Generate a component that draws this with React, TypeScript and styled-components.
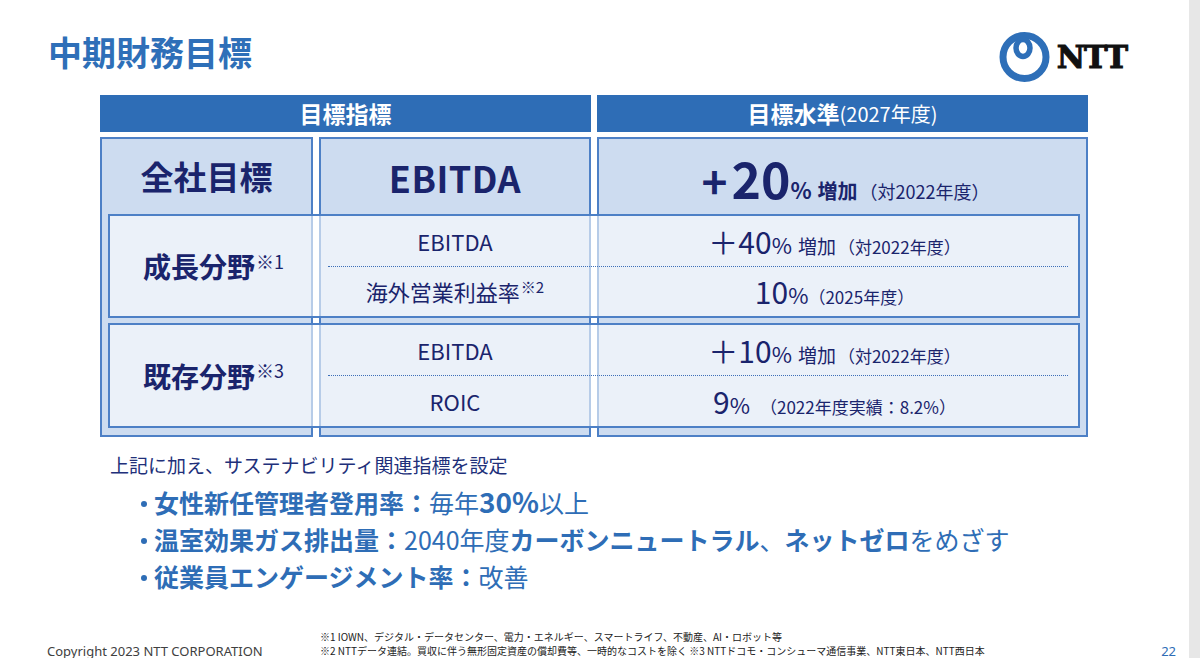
import React from "react";
import styled, { createGlobalStyle } from "styled-components";

const Global = createGlobalStyle`
  html, body { margin: 0; padding: 0; background: #fff; }
  #root { width: 1200px; height: 658px; overflow: hidden; }
  * { box-sizing: border-box; }
`;

const JP = `"Noto Sans CJK JP", "Noto Sans", sans-serif`;
const NAVY = "#1a246c";
const BLUE = "#2e6db6";
const LINE = "#4d80c6";

const Page = styled.div`
  display: flex;
  width: 1200px;
  height: 658px;
  font-family: ${JP};
`;

const Slide = styled.div`
  flex: 1;
  display: flex;
  flex-direction: column;
`;

const ScrollStrip = styled.div`
  width: 11px;
  background: #e7e7e7;
`;

const TitleRow = styled.div`
  display: flex;
  justify-content: space-between;
  align-items: flex-start;
  height: 95px;
  padding: 31px 62px 0 48px;
`;

const Title = styled.h1`
  margin: 0;
  font-size: 34px;
  line-height: 42px;
  font-weight: 700;
  color: #2e6fb8;
`;

const Logo = styled.div`
  display: flex;
  align-items: center;
  gap: 7px;
  margin-top: 1px;
`;

const LogoText = styled.span`
  font-family: "DejaVu Serif", serif;
  font-weight: 900;
  font-size: 31px;
  line-height: 1;
  color: #111;
  letter-spacing: -1px;
  -webkit-text-stroke: 1px #111;
`;

const HeaderGrid = styled.div`
  display: grid;
  grid-template-columns: 213px 272px 491px;
  column-gap: 6px;
  margin-left: 100px;
  height: 37px;
  margin-bottom: 5px;
`;

const HeaderCell = styled.div<{ $span?: number }>`
  grid-column: span ${(p) => p.$span ?? 1};
  background: ${BLUE};
  color: #fff;
  display: flex;
  align-items: center;
  justify-content: center;
  font-size: 23px;
  font-weight: 700;
  line-height: 1;
`;

const HeaderSub = styled.span`
  font-weight: 400;
  font-size: 20px;
`;

const Body = styled.div`
  display: grid;
  grid-template-columns: 213px 272px 491px;
  grid-template-rows: 77px 104px 5px 105px 9px;
  column-gap: 6px;
  margin-left: 100px;
  width: 988px;
`;

const ColumnBox = styled.div<{ $col: number }>`
  grid-column: ${(p) => p.$col};
  grid-row: 1 / -1;
  background: #cddcf0;
  border: 2px solid ${LINE};
`;

const TopCell = styled.div<{ $col: number }>`
  grid-column: ${(p) => p.$col};
  grid-row: 1;
  display: flex;
  align-items: center;
  justify-content: center;
  color: ${NAVY};
  padding-top: 2px;
`;

const TopLabel = styled.span`
  font-size: 33px;
  font-weight: 700;
  line-height: 1;
`;

const TopMetric = styled.span`
  font-size: 36px;
  font-weight: 700;
  line-height: 1;
  letter-spacing: 0.5px;
`;

const TopValue = styled.div`
  display: flex;
  align-items: baseline;
  font-weight: 700;
  line-height: 1;
  margin-left: 6px;
`;

const Sized = styled.span<{ $size: number; $weight?: number; $ml?: number }>`
  font-size: ${(p) => p.$size}px;
  font-weight: ${(p) => p.$weight ?? 400};
  margin-left: ${(p) => p.$ml ?? 0}px;
`;

const RowBox = styled.div<{ $row: number }>`
  grid-column: 1 / -1;
  grid-row: ${(p) => p.$row};
  margin: 0 8px;
  border: 2px solid ${LINE};
  background: rgba(255, 255, 255, 0.6);
  display: grid;
  grid-template-columns: 203px 1fr;
  column-gap: 6px;
  color: ${NAVY};
`;

const RowLabel = styled.div`
  display: flex;
  align-items: center;
  justify-content: center;
  padding-left: 4px;
`;

const LabelText = styled.span`
  font-size: 28px;
  font-weight: 700;
  line-height: 1;
`;

const Mark = styled.span<{ $size: number }>`
  font-size: ${(p) => p.$size}px;
  font-weight: 400;
  position: relative;
  top: -0.3em;
  margin-left: 1px;
`;

const RowRight = styled.div`
  display: flex;
  flex-direction: column;
`;

const SubRow = styled.div`
  flex: 1;
  display: grid;
  grid-template-columns: 272px 1fr;
  column-gap: 6px;
`;

const Divider = styled.div`
  height: 0;
  border-top: 1px dotted #3d6fb8;
  margin: 0 10px 0 9px;
`;

const Metric = styled.div`
  display: flex;
  align-items: center;
  justify-content: center;
  font-size: 22px;
  line-height: 1;
`;

const Value = styled.div`
  display: flex;
  align-items: center;
  justify-content: center;
  line-height: 1;
  padding-right: 6px;
`;

const ValueInner = styled.div`
  display: flex;
  align-items: baseline;
`;

const Notes = styled.div`
  margin: 14px 0 0 110px;
  color: #21307a;
`;

const NoteLead = styled.div`
  font-size: 19px;
  line-height: 28px;
  margin-bottom: 5px;
`;

const Bullets = styled.ul`
  list-style: none;
  margin: 0 0 0 30px;
  padding: 0;
  color: ${BLUE};
  font-size: 25px;
  line-height: 37px;
`;

const Item = styled.li`
  display: flex;
  align-items: center;
  white-space: nowrap;
`;

const Dot = styled.span`
  display: block;
  width: 6px;
  height: 6px;
  border-radius: 50%;
  background: ${BLUE};
  margin: 2px 7px 0 1px;
  flex: none;
`;

const Line = styled.span`
  display: flex;
  align-items: baseline;
`;

const Bold = styled.b<{ $size?: number }>`
  font-weight: 700;
  line-height: 1;
  ${(p) => (p.$size ? `font-size: ${p.$size}px;` : "")}
`;

const Footer = styled.div`
  margin-top: auto;
  display: grid;
  grid-template-columns: 273px 1fr auto;
  align-items: end;
  padding: 0 13px 0 47px;
  height: 28px;
`;

const Copyright = styled.div`
  font-family: "Noto Sans", sans-serif;
  font-size: 13px;
  line-height: 14px;
  color: #404040;
  white-space: nowrap;
`;

const Footnotes = styled.div`
  font-size: 10px;
  line-height: 14px;
  color: #222;
  white-space: nowrap;
`;

const PageNum = styled.div`
  font-family: "Noto Sans", sans-serif;
  font-size: 13px;
  line-height: 14px;
  color: ${BLUE};
`;

const NttMark = () => (
  <svg width="51" height="50" viewBox="0 0 51 50">
    <circle cx="25.5" cy="25" r="21.5" fill="none" stroke="#2e6fb8" strokeWidth="7" />
    <ellipse cx="24" cy="16" rx="7" ry="8.5" fill="none" stroke="#2e6fb8" strokeWidth="5.5" />
  </svg>
);

export default function App() {
  return (
    <Page>
      <Global />
      <Slide>
        <TitleRow>
          <Title>中期財務目標</Title>
          <Logo>
            <NttMark />
            <LogoText>NTT</LogoText>
          </Logo>
        </TitleRow>

        <HeaderGrid>
          <HeaderCell $span={2}>目標指標</HeaderCell>
          <HeaderCell>
            目標水準<HeaderSub>(2027年度)</HeaderSub>
          </HeaderCell>
        </HeaderGrid>

        <Body>
          <ColumnBox $col={1} />
          <ColumnBox $col={2} />
          <ColumnBox $col={3} />

          <TopCell $col={1}>
            <TopLabel>全社目標</TopLabel>
          </TopCell>
          <TopCell $col={2}>
            <TopMetric>EBITDA</TopMetric>
          </TopCell>
          <TopCell $col={3}>
            <TopValue>
              <Sized $size={44} $weight={700}>+</Sized>
              <Sized $size={50} $weight={700} $ml={4}>20</Sized>
              <Sized $size={22} $weight={700}>%</Sized>
              <Sized $size={20} $weight={700} $ml={6}>増加</Sized>
              <Sized $size={18} $ml={2}>（対2022年度）</Sized>
            </TopValue>
          </TopCell>

          <RowBox $row={2}>
            <RowLabel>
              <LabelText>成長分野</LabelText>
              <Mark $size={18}>※1</Mark>
            </RowLabel>
            <RowRight>
              <SubRow>
                <Metric>EBITDA</Metric>
                <Value>
                  <ValueInner>
                    <Sized $size={30}>＋40</Sized>
                    <Sized $size={22}>%</Sized>
                    <Sized $size={19} $ml={6}>増加</Sized>
                    <Sized $size={17} $ml={2}>（対2022年度）</Sized>
                  </ValueInner>
                </Value>
              </SubRow>
              <Divider />
              <SubRow>
                <Metric>
                  海外営業利益率<Mark $size={15}>※2</Mark>
                </Metric>
                <Value>
                  <ValueInner>
                    <Sized $size={30}>10</Sized>
                    <Sized $size={22}>%</Sized>
                    <Sized $size={17}>（2025年度）</Sized>
                  </ValueInner>
                </Value>
              </SubRow>
            </RowRight>
          </RowBox>

          <RowBox $row={4}>
            <RowLabel>
              <LabelText>既存分野</LabelText>
              <Mark $size={18}>※3</Mark>
            </RowLabel>
            <RowRight>
              <SubRow>
                <Metric>EBITDA</Metric>
                <Value>
                  <ValueInner>
                    <Sized $size={30}>＋10</Sized>
                    <Sized $size={22}>%</Sized>
                    <Sized $size={19} $ml={6}>増加</Sized>
                    <Sized $size={17} $ml={2}>（対2022年度）</Sized>
                  </ValueInner>
                </Value>
              </SubRow>
              <Divider />
              <SubRow>
                <Metric>ROIC</Metric>
                <Value>
                  <ValueInner>
                    <Sized $size={30}>9</Sized>
                    <Sized $size={22}>%</Sized>
                    <Sized $size={17} $ml={10}>（2022年度実績：8.2%）</Sized>
                  </ValueInner>
                </Value>
              </SubRow>
            </RowRight>
          </RowBox>
        </Body>

        <Notes>
          <NoteLead>上記に加え、サステナビリティ関連指標を設定</NoteLead>
          <Bullets>
            <Item>
              <Dot />
              <Line>
                <Bold>女性新任管理者登用率：</Bold>毎年<Bold $size={28}>30%</Bold>以上
              </Line>
            </Item>
            <Item>
              <Dot />
              <Line>
                <Bold>温室効果ガス排出量：</Bold>2040年度<Bold>カーボンニュートラル</Bold>、<Bold>ネットゼロ</Bold>をめざす
              </Line>
            </Item>
            <Item>
              <Dot />
              <Line>
                <Bold>従業員エンゲージメント率：</Bold>改善
              </Line>
            </Item>
          </Bullets>
        </Notes>

        <Footer>
          <Copyright>Copyright 2023 NTT CORPORATION</Copyright>
          <Footnotes>
            <div>※1 IOWN、デジタル・データセンター、電力・エネルギー、スマートライフ、不動産、AI・ロボット等</div>
            <div>※2 NTTデータ連結。買収に伴う無形固定資産の償却費等、一時的なコストを除く ※3 NTTドコモ・コンシューマ通信事業、NTT東日本、NTT西日本</div>
          </Footnotes>
          <PageNum>22</PageNum>
        </Footer>
      </Slide>
      <ScrollStrip />
    </Page>
  );
}
